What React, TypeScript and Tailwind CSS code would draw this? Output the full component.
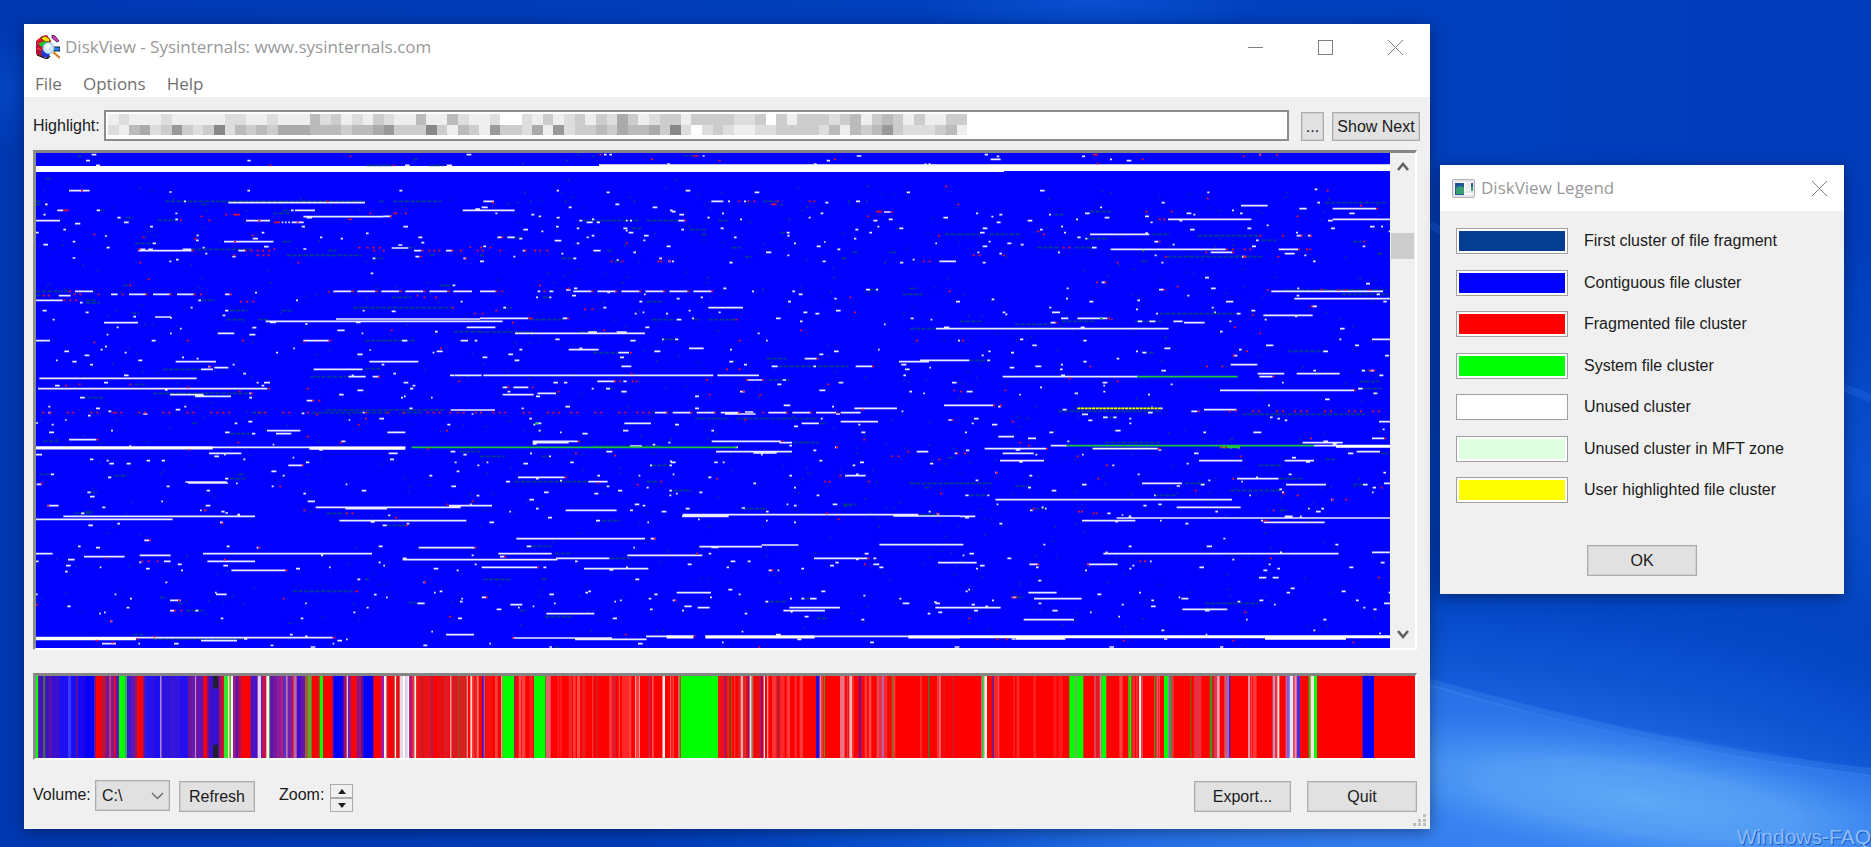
import { useId } from "react";

type Tile = {
  dx: number;
  dy: number;
  unused: string;
  wide?: string;
  fragmented: string;
  first: string;
  system?: string;
  highlighted?: string;
};

// Runs are "x,y,length" in thirds of a pixel, grouped in tiles of the volume map.
const tiles: Tile[] = [
  {
    dx: 0,
    dy: 0,
    unused:
      "275,464,14 258,482,12 742,482,10 288,496,12 1215,496,14 1340,496,16 1400,464,14 207,572,62 508,576,7 742,572,8 1198,572,9 685,608,410 552,604,6 135,613,8 172,631,18 290,631,10 885,631,60 873,631,8 1388,631,52 1426,627,14 910,650,240 1150,649,25 130,644,7 352,653,10 526,640,6 526,658,8 920,653,16 108,662,72 738,662,72 372,667,14 845,667,5 855,667,5 865,667,5 875,667,36 225,671,16 450,680,9 905,680,10 1210,680,14 190,689,8 108,698,8 785,698,8 1098,700,8 315,708,6 590,706,6 960,712,7 1022,716,7 1255,712,12 758,716,16 588,721,8 218,725,8 672,725,148 1264,728,9 458,730,10 130,734,14 792,740,14 320,743,9 608,743,6 910,747,9 1175,744,50 1195,735,12 415,752,160 420,748,16 445,748,14 548,748,26 1242,752,22 1338,752,18 715,752,20 616,761,6 697,770,10 218,774,8 1118,775,8 1246,770,12 528,779,8 508,784,6 1390,775,8 1112,820,8 1358,856,8 225,874,54 176,887,36 108,901,80 333,883,20 387,883,50 459,883,50 531,883,50 1000,874,54 1072,874,54 1144,874,54 1216,874,54 1288,874,54 1360,874,56 765,878,6 675,883,14 595,901,8 888,901,6 1382,905,6 240,908,8 572,923,6 128,932,12 257,937,9 675,932,10 668,946,8 1175,934,12 1088,932,6 465,951,48 400,950,8 510,954,6 158,959,6 312,968,102 797,964,643 1008,957,432 810,967,18 1068,967,14 915,972,8 757,983,12 350,982,6 1400,982,40",
    fragmented:
      "1048,469 808,496 1178,496 243,572 190,631,16 540,661 602,649 675,644 700,644,20 625,661 775,662 822,667,18 1180,640,12 1045,658,10 1215,640 1108,640 1170,649 890,667 280,703 428,712 583,716 755,707 702,725 415,748 575,752 735,752 752,752 770,752 786,752 805,752 820,747 700,766 770,766 788,766 803,766 1075,743 1100,743 1118,743 1136,743 1120,752 1148,752 1408,741 1265,752 1285,752 1300,752 1315,752 1355,752 1380,752 1430,752 1260,770 1395,775 418,788 892,788 443,838 388,856 207,874 128,887 143,887 190,901 208,901 225,901 220,883 238,883 293,883 365,883 437,883 509,883 581,883 600,883 690,883 720,905 738,905 757,905 983,876 1055,874 1127,874 1199,874 1271,874 1343,874 1250,887 1271,892 1305,892 1355,923 1423,941 980,604",
    first:
      "232,469,14 1100,496,75 1240,478,14 1290,496,40 138,536,16 495,604,600 1138,604,18 1180,604,145 108,604,14 108,613,16 605,613,20 300,631,10 850,631,22 820,640,50 380,653,20 472,661,60 405,730,50 848,725,26 575,748,180 860,766,180 1045,766,40 985,752,25 1225,743,20 1125,775,25 1290,766,15 370,856,18 108,874,100 108,887,20 1175,892,60 605,901,40 258,901,32 258,909,42 1060,923,295 690,932,55 395,940,22 680,959,55 775,959,30 1320,856,40 845,932,30",
  },
  {
    dx: 1440,
    dy: 270,
    unused:
      "372,194,8 388,194,8 668,198,6 1130,198,14 1040,212,10 562,222,8 1002,222,8 1334,222,5 1346,222,6 230,302,7 380,307,9 617,302,14 824,307,14 1280,307,10 10,334,32 694,334,36 744,334,6 792,334,6 1128,334,12 1036,338,9 406,343,12 5,352,18 266,352,9 518,352,14 570,361,8 0,361,104 575,365,12 598,374,14 1022,370,8 726,370,6 1212,366,20 46,370,6 154,374,9 176,379,7 230,383,9 682,383,7 780,388,6 1390,383,14 986,383,6 1180,392,12 1226,388,12 298,392,9 336,388,7 320,397,18 350,397,10 438,392,5 450,392,6 595,392,20 228,410,8 290,415,8 430,415,12 722,415,9 1258,415,12 1192,410,6 130,419,14 604,419,8 1126,419,9 184,424,6 446,428,14 437,422,6 920,428,9 1168,428,8 922,437,7 52,442,14 82,442,22 335,437,8 320,442,6 492,437,14 762,442,8 118,446,9 1122,446,7 490,451,6 224,452,20 290,460,8 942,460,6 1032,456,5 1366,460,5 10,469,8 560,469,12 1010,469,12 1072,478,9 340,482,22 128,482,10 460,487,8 858,487,16 244,491,6 100,500,6 922,496,6 280,505,9 538,505,8 410,510,6 0,514,12 565,514,8 576,514,6 748,518,10 1028,514,9 1260,518,10 1378,514,50 1298,509,6 282,595,10 730,595,9 0,604,48 280,604,55 352,604,55 424,604,55 496,604,55 568,604,55 640,604,55 173,604,8 208,604,12 258,600,14 382,607,8 816,604,6 937,604,8 1158,599,12 1188,599,6 492,613,5 956,613,12 276,617,12 168,622,6 208,622,6 590,626,9 662,622,7 1063,626,7 924,635,9 478,635,9 1428,635,12 70,653,8 370,653,9 685,653,104 626,662,6 1068,662,14 716,667,6 970,667,12 1006,671,12 558,671,6 488,667,5 464,671,6 0,685,145 248,685,14 888,685,14 636,685,6 1292,685,9 590,689,14 1352,689,5",
    fragmented:
      "358,194 640,198,16 513,208 716,212 1062,208 1395,289 36,338 775,334 802,334 820,334 890,334 874,343,16 986,334 1000,334 1432,343 1188,365,18 1232,366 1162,379 612,392 64,442 437,460 1374,437 0,473 28,473 6,482 58,482 133,482 162,482 178,482 199,482 392,514 424,514 532,514 541,514 566,514 1328,514 1346,514 177,586 262,595 46,604 64,604 190,604 334,604 406,604 478,604 550,604 622,604 694,604 1406,604 1108,622 46,662 5,671 312,658 334,658 1122,667 146,685,12 262,685 766,689",
    first:
      "610,198,30 850,334,40 310,392,168 500,392,95 715,392,28 455,415,30 630,419,50 665,433,16 95,442,35 1395,433,45 755,473,28 382,482,16 795,500,22 1118,487,14 1234,487,18 1085,505,16 245,505,32 0,496,10 405,514,18 1288,595,22 1268,613,60 1168,599,28 500,635,45 188,622,24 70,653,25 150,689,100 515,689,70 640,689,22 685,689,85 902,428,18 262,271 586,271 292,194 338,199 126,221 258,212 1162,289 132,307 83,343 110,338 150,334 255,334 460,334 902,343 1103,334 1158,334 978,352 965,361 925,388 808,397 625,410 200,550 682,563 1060,563 1212,518 845,599",
  },
  {
    dx: 2880,
    dy: 0,
    unused:
      "74,464,10 110,469,8 92,478,30 366,469,9 450,478,6 500,482,14 898,464,5 240,572,14 742,577,6 1064,568,8 605,608,9 1072,608,8 843,617,80 420,622,6 1018,626,22 1118,626,130 816,631,6 375,640,14 680,640,14 840,640,8 1168,640,16 48,640,6 118,644,9 267,644,6 700,644,6 555,649,12 434,653,14 94,650,6 203,662,14 348,658,6 624,658,250 658,662,9 1118,658,172 1104,662,14 110,667,12 572,667,6 303,680,6 862,685,12 1230,680,14 1263,680,6 1113,685,12 68,685,14 240,689,8 690,689,14 1286,694,6 60,698,14 312,698,6 390,703,178 556,699,8 920,676,6 1008,698,6 1010,707,16 1044,707,10 352,712,10 376,716,6 583,725,12 888,721,8 86,725,6 142,730,12 182,734,9 638,734,6 1208,739,8 68,739,14 396,743,14 876,739,12 452,748,345 956,748,58 752,757,65 974,761,30 52,757,6 294,757,6 118,761,8 584,766,6 1033,766,6 846,770,10 1059,784,8 604,788,6 68,788,9 735,833,12 425,847,10 1218,851,12 753,865,14 320,865,6 597,869,14 934,874,335 1012,865,6 682,887,6 1010,887,8 1250,883,10 95,898,8 318,896,6 1003,896,287 532,901,8 388,905,12 798,905,22 1270,905,10 268,923,6 1055,919,16 755,923,6 528,928,6 874,932,12 276,937,24 128,937,8 136,943,6 763,937,5 588,941,6 830,941,12 910,946,148 1005,949,7 303,955,22 352,955,90 914,959,6",
    fragmented:
      "398,464,16 410,491 545,478 848,469 899,464 948,464 1100,572 740,595 1200,617 1248,626 556,635 632,635 1010,649 596,658 610,658 232,694 248,703 596,725 898,707 966,707 1022,707 1050,707 1210,725 308,743 326,743 798,748 816,748 868,748 852,748 1014,748 1038,748 1048,748 816,757 736,757 38,766 56,766 128,766 614,770 850,770,10 952,770 470,788 408,847 434,847 650,860 610,869 920,870 1082,869 1132,870 1154,870 1226,870 1052,919 876,945 444,955 452,958",
    first:
      "1095,608,185 390,635,65 283,644,28 0,703,60 88,703,55 150,703,30 575,703,55 712,707,190 375,716,70 905,721,45 1180,725,25 232,743,65 345,743,60 620,770,290 545,784,20 1252,761,14 970,870,310 1145,883,140 600,941,225",
    system: "420,955,8 548,752,5",
  },
  {
    dx: 0,
    dy: 960,
    unused:
      "1012,31,22 653,40,50 748,44,18 1305,35,8 320,44,5 510,40,5 1085,40,5 540,26,5 108,62,42 455,62,12 910,62,76 1206,62,16 1382,62,22 1424,62,8 315,80,6 302,89,6 880,85,5 1108,90,5 193,94,14 374,98,6 1310,94,18 1298,98,5 828,98,6 254,106,14 1072,103,16 546,112,6 590,116,6 168,121,5 415,121,12 217,125,13 527,125,121 1108,125,147 270,134,9 698,134,6 1145,134,8 643,143,42 625,140,6 603,148,36 941,148,147 1350,166,12 1363,166,77 730,161,8 1180,161,8 372,166,14 1055,166,6 1045,170,52 1118,170,20 118,175,472 312,188,12 770,188,6 792,188,18 1211,188,14 1238,197,8 165,197,14 785,197,8 114,206,688 1230,206,10 495,210,8 1072,211,18 748,220,8 1017,224,14 510,224,100 588,226,24 585,229,108 1203,233,6 1212,229,5 240,233,14 748,233,8 1293,233,5 920,242,18 145,260,6 553,260,6 288,265,12 1228,265,10 527,269,14 1352,270,88 325,274,9 145,278,8 905,280,8 430,282,12 1415,282,5 1088,278,6 264,287,8 1138,296,14 745,305,12 195,300,5 1046,300,5 108,309,6 704,310,8 1342,314,9 155,314,6 333,332,6 801,332,100 147,337,15 675,337,14 1162,337,54 828,341,46 756,341,10 207,359,82 1024,364,12 818,374,5 388,378,6 108,382,1108 958,390,10 108,404,18 627,400,97 1166,400,27 643,409,14 672,404,5 1390,404,10 1352,395,14 878,413,5 270,418,10 730,418,6 1170,418,12 320,422,6 440,422,10 485,422,10 918,427,10 1364,427,6 328,431,14 380,431,12 865,436,42 1432,436,6 814,454,15 1370,454,8 152,463,10 848,467,6 1288,467,9 324,472,10 675,476,10 556,486,124 564,489,120 708,490,5 110,493,14 1037,493,5 500,499,9 815,499,6 1354,499,14 620,512,10 1085,512,14 262,517,10 910,521,8 1430,527,8 270,530,14 484,544,5 923,544,22 142,557,34 617,557,14 307,562,9 947,562,435 1036,566,125 1347,557,93 1410,553,5 600,571,5 664,575,10 676,579,8 243,580,10 712,584,8 190,589,575 108,598,410 1018,602,381 1165,586,6 1112,606,12 352,611,8 660,607,8 265,616,14 1148,616,12 1220,611,8 433,661,14 234,679,8 680,679,9 1136,679,12 288,683,12 1256,683,168 770,683,6 108,701,50 609,701,507 419,706,93 963,706,6 1415,706,6 252,710,122 204,719,20 1208,719,232 1208,715,12 108,724,8 622,724,143 492,724,20 418,727,6 533,733,12 1136,727,6 1424,733,6 198,737,14 670,737,14 299,742,5 987,742,5 1150,737,5 438,746,11 888,746,12 1301,746,14 195,755,8 543,751,6 694,751,163 1370,751,6 1072,778,9 496,787,6 1270,787,6 108,823,5 344,823,5 648,823,32 645,818,5 1122,824,8 1158,832,5 1302,818,5 1319,814,8 390,836,6 1384,836,5 510,841,32 1380,845,8 202,859,10 380,863,8 915,850,5 1252,850,22 1100,863,6 510,872,14 586,872,9 312,877,5 298,881,5 1060,877,6 662,895,8 902,895,8 1374,895,12 330,904,7 1294,935,5 1338,944,84 870,944,8 108,953,890 915,949,8 732,957,10 603,962,108 1012,962,14 306,971,42 522,971,14 1038,958,5 415,971,5 998,971,5 812,976,8 1270,976,12 932,981,14",
    wide: "108,384,530 928,385,288 108,956,300",
    fragmented:
      "280,67 560,62 726,62 988,62 910,66 1320,85 1172,31 628,139 236,193 388,193 195,197 560,202 804,206 716,215 752,220 920,206 1134,170 1375,184 937,242 955,242 127,278 148,278 200,278 217,278 271,278 289,278 338,278 345,278 361,278 415,278 433,278 487,278 505,278 559,278 577,278 631,278 649,278 667,278 685,278 775,278 793,278 847,278 865,278 920,278 1095,278 1160,278 1208,278 1280,278 1298,278 1316,278 1348,278 1370,278 1388,278 1424,278 948,283 1095,296 1073,314 1338,332 920,350 290,359 712,368 1020,368 564,390 1282,386 906,436 838,499 122,490 142,557 612,571,8 910,571 1340,553 1415,544 1038,580 1055,580 1185,593 665,611 1218,616 447,661 775,683 1424,683 317,714 672,719 424,724 443,724 470,724 857,751 1272,787 1066,814,8 848,836 534,841 108,854 522,872 541,872 1347,890 331,904 410,957 460,950 287,962 334,968 1000,953",
    first:
      "490,148,110 1095,62,150 1360,35,80 930,170,110 405,193,30 460,220,290 245,233,65 980,270,355 755,278,40 937,278,150 1100,278,70 1205,278,60 690,341,60 1095,146,50 577,310,14 1380,395,60 690,476,50 715,463,20 117,463,32 345,467,35 272,517,20 225,580,55 255,575,24 980,580,55 1160,616,60 878,814,180 1095,778,12 480,832,20 560,872,55 535,850,14 1225,848,25 400,944,35 460,957,270 130,364,50",
    system: "1235,382,205",
  },
  {
    dx: 1440,
    dy: 960,
    unused:
      "0,4,68 0,22,46 496,22,12 105,40,390 325,36,26 410,36,30 1368,26,72 1392,22,16 960,4,8 1212,13,5 226,58,13 451,62,16 546,58,5 585,58,10 833,40,6 858,62,5 1434,62,6 266,89,90 298,85,9 627,85,44 118,89,9 523,94,18 1062,94,14 415,98,32 85,103,14 1018,103,12 420,112,12 8,112,14 750,89,6 1194,89,5 974,116,36 104,121,14 748,125,12 1257,125,90 1320,121,120 1264,134,15 792,134,9 424,139,30 875,139,18 1000,139,8 1127,139,50 1275,148,14 1348,143,5 10,166,690 712,166,125 0,166,5 1270,166,8 352,184,54 430,184,10 800,180,46 908,180,10 220,188,14 252,188,10 892,193,12 1076,188,14 1416,188,14 68,202,14 100,202,45 335,206,6 378,206,12 1018,211,18 83,215,8 424,215,16 780,215,14 1288,215,8 172,220,56 68,224,93 1330,220,5 168,229,12 645,229,12 125,265,6 256,260,14 911,256,20 645,265,12 1056,260,6 1392,256,48 0,270,45 1123,265,128 525,278,35 578,278,54 650,278,54 722,278,54 795,276,25 865,278,54 937,278,54 1008,278,60 1082,278,60 735,282,92 1068,282,12 1265,274,5 148,296,8 1022,296,6 433,310,80 1082,305,112 1405,300,12 160,314,6 168,310,16 585,314,12 965,310,52 942,319,12 1135,314,6 176,332,6 429,332,16 694,332,8 240,337,5 307,341,16 1144,337,12 158,364,135 158,368,108 158,372,12 565,368,6 518,374,8 695,364,207 898,368,38 928,377,8 450,378,36 766,382,8 1065,382,8 1000,391,9 379,395,18 708,395,228 820,399,70 843,404,5 1310,395,35 1424,400,8 150,400,6 207,409,6 570,424,6 573,427,14 20,427,5 130,431,14 271,427,10 703,427,10 728,427,6 510,436,6 568,436,8 1018,422,9 1140,427,12 1350,431,10 1118,436,8 352,467,8 114,472,140 168,476,8 476,467,5 578,463,5 685,472,9 928,467,8 1095,467,62 1128,463,8 78,485,12 240,482,6 325,485,58 380,499,8 820,490,8 942,503,6 500,503,6 414,512,13 192,517,14 343,521,12 568,512,8 568,526,6 588,521,5 658,517,9 1010,526,8 148,539,14 464,553,14 488,557,8 920,553,5 942,557,8 1058,553,14 0,557,36 168,566,8 617,566,12 785,564,10 257,571,153 450,571,9 88,575,5 545,575,14 858,575,8 1346,575,6 608,584,707 606,589,140 1240,588,200 204,593,12 654,598,5 28,607,14 348,602,12 502,607,5 858,602,5 942,607,6 1370,582,8 109,656,386 512,656,14 140,679,14 460,683,5 658,680,188 694,682,22 845,675,110 1198,674,242 55,701,160 686,701,8 1154,701,12 442,706,225 60,710,14 0,719,232 228,715,160 1002,715,160 1128,718,8 1180,715,9 285,724,8 752,724,14 803,724,9 1066,728,10 1374,728,66 623,733,12 1180,733,18 1050,737,12 5,742,167 190,742,9 740,742,7 1198,742,12 312,746,193 388,750,12 438,742,6 866,751,12 893,751,5 964,746,8 466,778,12 745,809,12 316,818,8 325,814,8 590,818,103 1024,814,12 208,823,14 523,823,10 776,823,6 1150,827,6 5,832,14 506,836,8 690,832,6 930,836,6 990,836,20 964,836,9 1258,836,6 403,845,5 420,841,5 578,841,9 856,845,9 1362,846,8 1268,850,20 1366,850,14 91,854,36 222,850,5 114,863,5 158,859,5 613,859,22 928,863,152 1366,863,74 50,868,14 510,868,8 653,863,36 606,872,6 910,872,125 932,876,6 199,881,144 794,881,8 1343,881,8 1375,877,12 398,895,13 974,890,12 1144,899,9 785,935,5 888,944,14 98,954,298 285,958,215 498,949,145 676,949,764 952,958,12 474,971,14 726,967,5 1170,967,12 28,971,5 208,981,8 1424,981,14",
    wide: "560,951,80 676,951,328 1285,951,155",
    fragmented:
      "96,8 370,31 960,31 776,62 1308,62 450,98 1010,116 738,148 776,148 1176,139 452,161 402,184 418,184 455,184 466,184 678,180 798,180 846,180 82,202 155,202 232,215 1042,193 686,224 838,224 788,215 1420,211 0,278 38,278 56,278 73,278 128,278 146,278 200,278 217,278 235,278 271,278 289,278 343,278 361,278 415,278 433,278 469,278 487,278 505,278 559,278 631,278 703,278 775,278 847,278 919,278 991,278 1070,278 1145,269 793,300 1415,300 294,364 904,364 1068,382 1150,359 285,400 402,407 1282,395 1234,409 1253,409 1375,418 1430,400 254,472 708,476 1078,467 352,489 470,494 541,485 1032,485 1046,485 1163,485 1380,521 1038,580 1370,580 1073,598 522,656 72,710 648,701 1163,715 172,742 1152,733 874,751 18,832 583,841 640,949 96,954 434,944 835,981",
    first:
      "0,36,160 300,36,50 860,116,60 895,139,210 1290,26,80 550,58,30 865,180,70 340,98,80 390,206,8 645,296,105 770,296,240 1020,310,20 340,378,200 940,368,75 0,409,75 185,409,20 105,485,220 500,485,30 580,512,55 515,436,50 1290,490,150 1090,553,40 1090,558,22 790,566,70 365,602,55 155,679,60 225,701,50 390,715,60 10,778,80 185,778,18 195,890,80 870,845,50 225,981,15 120,872,20 975,836,20 1010,895,30 1320,584,50 1333,503,22 1405,413,22",
    system: "0,382,770 165,310,10",
  },
  {
    dx: 2880,
    dy: 960,
    unused:
      "0,26,626 362,22,12 272,8,16 533,4,14 568,4,18 640,4,28 672,8,62 808,4,6 780,35,8 1140,26,14 180,58,10 370,62,10 1138,58,6 1236,58,54 217,76,13 918,76,22 1185,76,12 613,85,18 837,89,8 85,94,7 1090,94,14 528,94,6 153,98,9 547,98,12 65,106,6 820,107,12 1275,107,12 470,116,8 0,121,28 82,121,8 370,125,10 812,134,80 303,134,6 149,143,14 226,139,18 300,148,8 604,152,14 1060,152,8 893,161,80 1010,161,129 1205,152,10 1228,152,15 1258,166,12 128,170,405 303,166,12 898,170,40 428,188,14 632,193,6 966,188,5 430,197,5 240,202,6 1194,206,14 780,211,402 20,215,18 430,215,6 344,220,10 1240,220,12 178,224,5 564,224,6 1095,238,14 0,256,100 114,260,8 924,256,6 600,265,8 573,262,6 308,269,12 732,269,98 694,274,18 564,278,14 366,283,18 429,292,14 460,292,10 508,296,6 930,292,8 952,296,8 42,296,14 385,301,12 974,301,8 1257,305,33 35,310,6 96,314,16 508,310,6 466,332,16 268,337,12 880,337,24 15,337,6 730,337,8 1268,328,6 115,350,47 204,355,24 1236,355,36 322,364,6 1028,368,120 1090,364,14 1118,372,12 272,377,50 1062,377,66 74,386,184 167,390,14 398,386,195 595,390,9 810,382,6 832,382,8 18,391,10 1190,395,70 128,400,93 702,400,14 1164,400,16 226,404,6 366,404,5 996,413,12 120,422,132 717,422,130 974,422,88 178,426,10 1038,426,12 680,431,6 457,436,6 106,458,6 1270,458,8 208,467,9 986,463,9 533,463,6 831,476,125 888,472,6 47,481,8 745,481,6 844,485,5 366,494,14 546,490,120 722,494,12 978,494,120 1209,494,14 1272,490,18 650,498,10 204,503,9 1238,503,10 958,508,8 275,512,14 1236,517,5 966,517,6 582,526,5 16,526,10 82,526,6 868,526,5 106,539,710 1113,539,5 110,553,5 550,557,10 595,553,10 650,562,192 1084,566,8 245,562,6 210,571,8 255,566,5 1044,566,5 766,575,8 1068,575,14 0,589,46 15,593,12 470,594,820 442,580,10 485,585,5 506,589,8 974,589,24 1020,589,5 366,602,160 466,605,8 600,602,5 118,611,9 911,607,183 676,611,9 903,602,6 790,656,6 0,674,10 250,674,6 506,679,9 740,679,16 1126,674,9 1236,697,54 28,701,14 430,701,706 437,697,6 960,697,6 8,706,5 142,715,12 817,719,6 570,724,5 0,728,50 1262,728,12 208,733,26 381,733,92 926,733,6 517,737,6 60,737,14 48,746,6 228,742,8 508,746,6 718,742,14 1168,742,12 375,751,6 910,751,12 952,746,8 897,773,22 938,773,18 235,782,9 17,814,6 25,809,5 992,805,12 205,818,85 537,818,6 980,818,10 1145,814,12 1286,818,5 412,823,12 155,832,14 222,836,143 656,832,5 664,836,21 96,841,6 574,841,8 833,845,8 898,841,12 1188,841,8 35,854,10 236,850,8 485,854,6 942,854,5 1272,850,18 76,859,8 0,863,122 573,859,14 1210,863,6 42,872,12 277,872,16 667,868,135 735,872,14 1240,868,10 390,877,5 475,890,5 191,899,151 858,899,5 1090,899,9 604,931,9 1060,931,6 1258,940,5 737,944,5 155,957,12 612,957,10 448,981,14 780,981,10",
    wide: "1128,379,162 0,950,1290 168,955,148 915,955,243",
    fragmented:
      "286,8 822,22 898,40 6,62 858,94 818,107 388,139 738,139 784,139 1228,152 1240,152 326,175 470,184 938,170 133,211 1182,211 0,215 100,256 120,256 715,274 806,274 825,272 876,274 894,274 948,274 966,274 1002,274 1020,274 1038,274 1092,274 1110,274 1164,274 1182,274 1200,274 1236,274 1254,274 155,305 1050,355 1272,355 178,368 204,377 258,386 595,386 782,382 795,382 12,400 350,409 839,409 438,436 108,458 412,476 817,476 1262,503 704,512 968,521 1010,526 1115,539 1155,539 218,566 354,575 363,575 398,580 407,580 938,571 910,602 920,602 930,715 538,724 552,724 232,733 381,733 1254,773 155,832 166,832 853,877 25,895 110,958 138,958 488,962 817,962 1177,967",
    first:
      "0,4,68 165,13,110 305,4,100 525,4,80 983,94,120 28,121,60 1198,184,60 1205,206,60 295,274,310 848,283,368 430,292,35 435,368,165 395,386,200 1262,400,25 897,436,70 675,490,60 960,476,70 812,512,150 1095,418,35 0,490,95 165,498,50 583,526,65 30,526,50 225,566,30 960,571,22 172,832,22 735,850,160 735,866,30 1180,494,30 550,98,35 1205,152,30",
    system: "531,170,302 318,377,744 780,382,60",
    highlighted: "352,265,250",
  },
];

function runs(list = "") {
  if (!list) return "";
  return list
    .split(" ")
    .map((run) => {
      const [x, y, length = 6] = run.split(",").map(Number);
      return `M${x} ${y}h${length}`;
    })
    .join("");
}

// Lone first clusters that are spread thinly over the volume.
function strayClusters() {
  let seed = 7;
  const next = () => {
    seed = (seed * 16807) % 2147483647;
    return seed / 2147483647;
  };
  let d = "";
  for (let i = 0; i < 620; i++) {
    const x = 112 + Math.floor(next() * 4040);
    const y = 565 + Math.floor(next() * 300) * 4.5;
    d += `M${x} ${y}h5`;
  }
  return d;
}

function ClusterMap() {
  return (
    <svg
      viewBox="108 459 4062 1485"
      preserveAspectRatio="none"
      className="block h-[495px] min-w-0 flex-1 bg-[#0000ff]"
      role="img"
      aria-label="Cluster map"
    >
      <path d={strayClusters()} stroke="#00309c" strokeWidth="5" />
      <path d="M108 498H1797V493H4170V513H3012V516H108Z" fill="#fff" />
      {tiles.map((tile) => (
        <g
          key={`${tile.dx}-${tile.dy}`}
          transform={`translate(${tile.dx} ${tile.dy})`}
          strokeWidth="5"
          fill="none"
        >
          <path d={runs(tile.first)} stroke="#003c8c" strokeDasharray="13 4" />
          <path d={runs(tile.unused)} stroke="#fff" strokeOpacity="0.92" />
          <path d={runs(tile.wide)} stroke="#fff" strokeWidth="9" />
          <path d={runs(tile.system)} stroke="#1cc43c" />
          <path d={runs(tile.highlighted)} stroke="#00307c" strokeWidth="6" />
          <path d={runs(tile.highlighted)} stroke="#f8f800" strokeDasharray="9 2" />
          <path d={runs(tile.fragmented)} stroke="#e01030" />
        </g>
      ))}
    </svg>
  );
}

// Overview bands as "x,width,colour"; anything left out is fragmented (red).
const bands =
  "108,7,00ff00 115,15,4014c0 130,6,208060 136,12,3a10c8 148,8,5014b0 156,20,3a10d0 176,28,1c10f0 204,9,3838ff 213,15,1c10ec 228,5,5a10b0 233,20,1808f8 253,30,0000ff 283,5,6a1898 305,12,b81440 317,12,701890 329,3,c080e0 332,10,8a1880 342,5,e01020 347,10,6018b0 357,18,00ff00 375,6,40a060 381,12,3a18d0 393,12,6018b0 405,6,901870 430,8,4a18c0 438,22,2414f0 460,20,1c10f0 480,5,9a88ff 485,30,2c14e0 515,25,3414e0 540,25,2410ec 565,10,5818b0 575,10,7018a8 585,4,a890e8 589,21,6414b0 622,8,5810a8 630,28,3a10d0 658,8,a81058 666,6,d01428 672,12,30e830 684,5,e8f0c0 689,4,50c030 693,6,fff4e8 699,8,9818a0 707,8,5a14a8 715,8,a01468 752,21,4a14c8 773,10,dcd4ff 783,4,6018c8 787,12,c01450 799,8,fff4ec 807,4,40a860 811,10,5018c0 821,10,7818a0 831,12,8820a0 843,6,c01c60 849,10,5830c8 859,4,b8a8f0 863,12,7020b0 875,6,c01850 881,6,a070d0 887,3,f09080 890,14,3c10d8 904,11,6018a8 915,8,a06030 923,12,60a830 950,9,e01018 959,10,00ff00 998,4,400cc0 1002,29,0000ff 1031,9,981460 1040,4,f0c0e0 1044,8,701cb0 1071,8,7018a8 1079,4,d01020 1083,7,5010b0 1090,30,0000ff 1144,8,981cb0 1152,8,fff0e8 1160,6,d01838 1176,6,e01010 1184,5,fff0e8 1189,10,e01010 1199,10,e8d8e8 1209,8,ffffff 1217,7,d4e0ff 1224,4,ffffff 1228,6,a01890 1236,6,e03050 1243,6,fff0e8 1249,12,e81818 1261,10,d01820 1271,22,e81418 1293,6,b01850 1317,8,d81820 1329,18,e01820 1350,5,f8a0a0 1355,16,dc1820 1373,5,806030 1378,22,d82020 1400,4,f09090 1411,6,ffd8d0 1417,6,ff3030 1423,5,e02028 1430,6,f07070 1446,5,3018d8 1451,4,b05090 1458,20,f81010 1485,8,f04040 1503,5,d0b080 1508,34,00ff00 1542,6,b02030 1556,8,ff5050 1566,10,ff4040 1588,10,ff2020 1602,33,00ff00 1635,3,508020 1638,14,e0606c 1672,6,ff2020 1680,6,ff1818 1706,10,f02828 1719,8,ff3838 1731,9,ff4848 1746,10,e82020 1776,4,f03838 1790,4,d02030 1827,10,ff3434 1838,10,e01830 1856,4,ff4848 1866,20,ff2828 1886,8,ff4040 1905,4,ffa0a0 1909,6,ff4040 1916,4,ff9090 1944,8,d81830 1956,5,ff5050 1986,3,ff8080 1989,6,fff0f0 2010,4,ff5858 2017,5,ff3838 2034,6,c07060 2042,112,00ff00 2154,20,f01018 2174,4,901880 2182,6,b04020 2193,3,508020 2202,4,ff3030 2214,8,e02020 2222,7,ffa8a8 2229,10,e02828 2243,5,801890 2249,5,f0d8f0 2254,4,70e070 2258,4,e02030 2270,12,e01018 2283,5,6018a0 2291,4,ffe0e0 2301,4,ff9090 2316,14,ff3030 2330,8,c01830 2340,14,ff2828 2360,10,ff3838 2384,6,ff3030 2399,10,ff3838 2448,11,2010e0 2459,5,e090b0 2464,5,ff3030 2471,4,609020 2520,14,f07080 2540,5,e03840 2548,8,f8b8b8 2556,6,ff3030 2578,5,4018d0 2594,7,ff3838 2606,8,ff4848 2630,7,e04858 2637,6,ff2828 2644,8,b860a8 2652,10,ff2828 2675,5,608020 2680,6,ff3838 2760,6,ff2828 2784,4,308030 2811,4,ff3838 2816,7,f06068 2830,4,e01830 2857,4,c82038 2944,3,c080c0 2947,6,30e040 2953,8,fff4f0 2976,6,801880 2982,12,f02830 2994,4,ff5050 3040,4,ff2828 3050,8,ff2828 3100,8,ff2020 3160,10,ff1818 3176,12,ff1818 3208,42,00ff00 3226,4,c08080 3282,6,e04050 3288,10,e01828 3299,6,c090a0 3305,13,00ff00 3318,3,c04030 3358,10,ff4040 3384,4,60a020 3388,6,00ff00 3397,8,f02830 3408,6,ff2828 3417,6,fff0f0 3423,6,e84048 3462,4,509020 3469,6,e85060 3476,4,ff4848 3492,12,00ff00 3504,5,9080d0 3509,8,608040 3517,4,e04050 3571,3,608010 3582,22,e83040 3629,8,509010 3637,5,c02030 3642,9,e83048 3651,8,e8a0b8 3673,6,d06070 3679,8,a868c0 3687,4,4020c0 3744,6,e090a8 3752,4,ff4848 3758,12,ff3838 3818,8,c090c8 3826,5,ff3030 3832,6,ffe8e8 3857,6,b068c0 3863,6,6068ff 3869,10,e8e8ff 3879,5,e04870 3884,6,f890a8 3891,9,3c30f0 3926,6,30c020 3932,10,f0e8e0 3942,9,00ff00 4088,34,0000ff";

function VolumeOverview() {
  return (
    <svg
      viewBox="108 78 4137 248"
      preserveAspectRatio="none"
      className="block h-[82px] w-full bg-[#ff0000]"
      role="img"
      aria-label="Volume overview"
    >
      {bands.split(" ").map((band) => {
        const [x, width, color] = band.split(",");
        return <rect key={x} x={x} y="78" width={width} height="248" fill={`#${color}`} />;
      })}
      <path d="M639 78h15v38h-15zM639 286h15v40h-15z" fill="#20202a" />
    </svg>
  );
}

const pathTop = "edeeedeeeeeddeedeeebdcedecdeebeebdeedffdecedcecdacedcceccccddcfcecccdcbecbceceecccdd";
const pathBottom = "debadc9cdc8dbcbcaaabbbcbba9ccc8cebce9ccdae9dccbcabbac8dfdcdeeddccccdbebcb9cdddcbe9";

function MaskedPath() {
  return (
    <svg
      viewBox="0 0 81 21"
      preserveAspectRatio="none"
      className="pointer-events-none absolute top-1 left-1 h-[21px] w-[72.5%]"
      shapeRendering="crispEdges"
      aria-hidden="true"
    >
      {Array.from({ length: 81 }, (_, i) => (
        <g key={i}>
          <rect x={i} y="0" width="1" height="11" fill={`#${pathTop[i].repeat(3)}`} />
          <rect x={i} y="11" width="1" height="10" fill={`#${pathBottom[i].repeat(3)}`} />
        </g>
      ))}
    </svg>
  );
}

function Wallpaper() {
  return (
    <svg
      viewBox="0 0 1871 847"
      preserveAspectRatio="none"
      className="absolute inset-0 h-full w-full"
      aria-hidden="true"
    >
      <defs>
        <linearGradient id="sky" x1="0" x2="1" y1="0" y2="0">
          <stop offset="0" stopColor="#0038b2" />
          <stop offset="0.6" stopColor="#0040be" />
          <stop offset="1" stopColor="#003cba" />
        </linearGradient>
        <radialGradient id="haze">
          <stop offset="0" stopColor="#3480f2" />
          <stop offset="0.4" stopColor="#2470ea" stopOpacity="0.9" />
          <stop offset="0.75" stopColor="#0c56d6" stopOpacity="0.6" />
          <stop offset="1" stopColor="#0048c8" stopOpacity="0" />
        </radialGradient>
        <radialGradient id="glow">
          <stop offset="0" stopColor="#5ea8f6" />
          <stop offset="0.45" stopColor="#549ff5" stopOpacity="0.9" />
          <stop offset="1" stopColor="#3a86f2" stopOpacity="0" />
        </radialGradient>
        <radialGradient id="spot">
          <stop offset="0" stopColor="#0a50d0" />
          <stop offset="1" stopColor="#0a50d0" stopOpacity="0" />
        </radialGradient>
        <linearGradient id="wave" x1="0" x2="1" y1="0" y2="0">
          <stop offset="0" stopColor="#3a82f2" stopOpacity="0" />
          <stop offset="0.5" stopColor="#3a82f2" stopOpacity="0.5" />
          <stop offset="1" stopColor="#3a82f2" stopOpacity="0.65" />
        </linearGradient>
      </defs>
      <rect width="1871" height="847" fill="url(#sky)" />
      <ellipse cx="1090" cy="0" rx="180" ry="36" fill="url(#spot)" />
      <ellipse cx="0" cy="90" rx="90" ry="60" fill="url(#spot)" fillOpacity="0.5" />
      <ellipse cx="1871" cy="480" rx="460" ry="240" fill="url(#spot)" />
      <ellipse cx="1480" cy="850" rx="880" ry="300" fill="url(#haze)" transform="rotate(6 1480 850)" />
      <path d="M1000 600Q1200 610 1430 684Q1640 748 1871 775V847H1000Z" fill="url(#wave)" />
      <path
        d="M1380 668Q1640 746 1871 772"
        fill="none"
        stroke="#4a90f6"
        strokeOpacity="0.3"
        strokeWidth="8"
      />
      <ellipse cx="1640" cy="800" rx="360" ry="72" fill="url(#glow)" transform="rotate(8 1640 800)" />
      <path d="M1430 224L1445 234M1844 388L1871 398" stroke="#1a62e0" strokeOpacity="0.5" strokeWidth="8" />
    </svg>
  );
}

function DiskViewIcon() {
  return (
    <svg viewBox="0 0 24 24" className="size-6" aria-hidden="true">
      <path d="M0 6L6 1l5-1 4 6-3 17-12-4z" fill="#d81830" />
      <path d="M0 6l7 4 1 13-8-4z" fill="#b81030" />
      <path d="M1 8l3 2M1 13l4 2" stroke="#ff5060" strokeWidth="1" />
      <path d="M5 3l4-2 5 3-1 3-5-1z" fill="#ffe000" stroke="#201800" strokeWidth="0.6" />
      <path d="M3 8l6-2 3 2-4 4-4-1z" fill="#10c828" />
      <path d="M5 16l4-1 5 5-3 3-5-2z" fill="#1838d0" />
      <path d="M1 20l10 4 3-3" fill="none" stroke="#181018" strokeWidth="1.2" />
      <path d="M16 0l3 1 4 5-2 1-5-4z" fill="#d040c0" stroke="#301030" strokeWidth="0.8" />
      <path d="M17 12h7v4h-6z" fill="#2080f0" stroke="#101830" strokeWidth="1" />
      <path d="M17 17l7 6" stroke="#d08020" strokeWidth="2.2" />
      <circle cx="12.500" cy="13" r="5.600" fill="#cce8fa" stroke="#88b4d4" strokeWidth="1" />
      <circle cx="11.500" cy="11.500" r="2.400" fill="#fff" />
    </svg>
  );
}

function LegendIcon() {
  return (
    <svg viewBox="0 0 23 19" className="h-[19px] w-[23px]" aria-hidden="true">
      <rect x="0.500" y="0.500" width="22" height="18" rx="1" fill="#e4e4e8" stroke="#b4b4b8" />
      <rect x="2" y="3" width="19" height="13" fill="#f8f8fa" />
      <rect x="3" y="4" width="9" height="12" fill="#2858a0" />
      <path d="M4 15V9l4-2 4 1v7z" fill="#38a070" />
      <path d="M4 5h4M9 7h2" stroke="#184080" strokeWidth="1" />
      <rect x="14" y="4" width="4" height="7" fill="#ececf0" />
      <rect x="19" y="4" width="2" height="4" fill="#2858a0" />
      <rect x="19" y="8" width="2" height="4" fill="#38a070" />
      <path d="M13 13h8" stroke="#d4d4d8" />
    </svg>
  );
}

function CloseIcon() {
  return (
    <svg viewBox="0 0 15 15" className="size-[15px]" aria-hidden="true">
      <path d="M0 0l15 15M15 0L0 15" stroke="#808080" strokeWidth="1" />
    </svg>
  );
}

const buttonClass =
  "border border-[#acacac] bg-[#e1e1e1] text-center whitespace-nowrap outline outline-[#d0d0d0] -outline-offset-2";

const sunkenClass =
  "border-t-3 border-r-2 border-b-2 border-l-3 border-t-[#858585] border-r-white border-b-white border-l-[#8c8c8c]";

function MainWindow() {
  const highlightId = useId();
  const volumeId = useId();

  return (
    <section className="min-w-0 flex-1 bg-[#f0f0f0] shadow-[0_3px_14px_rgba(0,0,0,0.4)]">
      <header className="flex h-[46px] items-center bg-white pr-6 pl-3">
        <DiskViewIcon />
        <h1 className="ml-[5px] flex-1 font-['Open_Sans',sans-serif] text-[17px] text-[#999999]">
          DiskView - Sysinternals: www.sysinternals.com
        </h1>
        <div className="flex items-center gap-[55px] pr-[3px]">
          <button type="button" aria-label="Minimize">
            <svg viewBox="0 0 15 15" className="size-[15px]" aria-hidden="true">
              <path d="M0 7.500h15" stroke="#808080" />
            </svg>
          </button>
          <button type="button" aria-label="Maximize">
            <svg viewBox="0 0 15 15" className="size-[15px]" aria-hidden="true">
              <rect x="0.500" y="0.500" width="14" height="14" fill="none" stroke="#808080" />
            </svg>
          </button>
          <button type="button" aria-label="Close">
            <CloseIcon />
          </button>
        </div>
      </header>

      <nav className="flex h-[27px] items-center gap-[21px] bg-white pl-[11px] font-['Open_Sans',sans-serif] text-[17px] leading-6 text-[#707070]">
        <button type="button">File</button>
        <button type="button">Options</button>
        <button type="button">Help</button>
      </nav>

      <div className="px-[9px] pt-[13px]">
        <div className="flex items-center pr-px">
          <label htmlFor={highlightId} className="w-[71px]">
            Highlight:
          </label>
          <div className="relative flex-1">
            <input
              id={highlightId}
              type="text"
              readOnly
              className="block h-[31px] w-full border-2 border-[#8c8c8c] bg-white px-1 outline-none"
            />
            <MaskedPath />
          </div>
          <button type="button" className={`${buttonClass} mt-[2px] ml-3 h-[29px] w-[23px]`}>
            ...
          </button>
          <button type="button" className={`${buttonClass} mt-[2px] ml-2 h-[29px] w-[88px]`}>
            Show Next
          </button>
        </div>

        <div className="pr-1">
          <div className={`${sunkenClass} mt-[9px] flex`}>
            <ClusterMap />
            <div className="flex w-[25px] flex-col items-center bg-[#f0f0f0]">
              <button type="button" aria-label="Scroll up" className="flex h-7 w-full items-center justify-center">
                <svg viewBox="0 0 12 10" className="h-[10px] w-3" aria-hidden="true">
                  <path d="M1 8l5-6 5 6" fill="none" stroke="#606060" strokeWidth="2.600" />
                </svg>
              </button>
              <div className="mt-[52px] h-[26px] w-[23px] bg-[#cdcdcd]" />
              <button
                type="button"
                aria-label="Scroll down"
                className="mt-auto flex h-7 w-full items-center justify-center"
              >
                <svg viewBox="0 0 12 10" className="h-[10px] w-3" aria-hidden="true">
                  <path d="M1 2l5 6 5-6" fill="none" stroke="#606060" strokeWidth="2.600" />
                </svg>
              </button>
            </div>
          </div>

          <div className={`${sunkenClass} mt-[23px]`}>
            <VolumeOverview />
          </div>
        </div>

        <footer className="flex h-[69px] items-start pt-5 pr-1">
          <label htmlFor={volumeId} className="mt-[3px] w-[62px]">
            Volume:
          </label>
          <div className="relative">
            <select
              id={volumeId}
              className="h-[31px] w-[75px] appearance-none border border-[#acacac] bg-[#e1e1e1] pl-[6px] outline outline-[#d0d0d0] -outline-offset-2"
            >
              <option>C:\</option>
            </select>
            <svg
              viewBox="0 0 13 8"
              className="pointer-events-none absolute top-3 right-[6px] h-2 w-[13px]"
              aria-hidden="true"
            >
              <path d="M1 1l5.500 5.500L12 1" fill="none" stroke="#707070" strokeWidth="1.500" />
            </svg>
          </div>
          <button type="button" className={`${buttonClass} mt-px ml-[9px] h-[31px] w-[76px]`}>
            Refresh
          </button>
          <span className="mt-[3px] ml-6 w-[51px]">Zoom:</span>
          <div className="mt-1 flex h-7 w-[23px] flex-col border border-[#acacac] bg-[#acacac]">
            <button type="button" aria-label="Zoom in" className="flex flex-1 items-center justify-center bg-[#f0f0f0]">
              <svg viewBox="0 0 8 5" className="h-[5px] w-2" aria-hidden="true">
                <path d="M0 5l4-5 4 5z" fill="#202020" />
              </svg>
            </button>
            <button
              type="button"
              aria-label="Zoom out"
              className="mt-[2px] flex flex-1 items-center justify-center bg-[#f0f0f0]"
            >
              <svg viewBox="0 0 8 5" className="h-[5px] w-2" aria-hidden="true">
                <path d="M0 0l4 5 4-5z" fill="#202020" />
              </svg>
            </button>
          </div>
          <button type="button" className={`${buttonClass} mt-px ml-auto h-[31px] w-[97px]`}>
            Export...
          </button>
          <button type="button" className={`${buttonClass} mt-px ml-4 h-[31px] w-[110px]`}>
            Quit
          </button>
        </footer>
      </div>
      <svg
        viewBox="0 0 13 12"
        className="pointer-events-none -mt-[15px] mr-1 mb-[3px] ml-auto block h-3 w-[13px]"
        aria-hidden="true"
      >
        <path
          d="M10 0h3v3h-3zM10 5h3v3h-3zM10 9h3v3h-3zM5 5h3v3H5zM5 9h3v3H5zM0 9h3v3H0z"
          fill="#bcbcbc"
        />
      </svg>
    </section>
  );
}

const legend = [
  { label: "First cluster of file fragment", color: "bg-[#053d92]" },
  { label: "Contiguous file cluster", color: "bg-[#0000ff]" },
  { label: "Fragmented file cluster", color: "bg-[#ff0000]" },
  { label: "System file cluster", color: "bg-[#00ff00]" },
  { label: "Unused cluster", color: "bg-white" },
  { label: "Unused cluster in MFT zone", color: "bg-[#e0ffe0]" },
  { label: "User highlighted file cluster", color: "bg-[#ffff00]" },
];

function LegendWindow() {
  return (
    <section className="mt-[141px] flex w-[404px] shrink-0 flex-col bg-[#f0f0f0] pb-[18px] shadow-[0_3px_14px_rgba(0,0,0,0.4)]">
      <header className="flex h-[46px] items-center bg-white pr-[17px] pl-3">
        <LegendIcon />
        <h2 className="ml-[6px] flex-1 font-['Open_Sans',sans-serif] text-[17px] text-[#999999]">DiskView Legend</h2>
        <button type="button" aria-label="Close">
          <CloseIcon />
        </button>
      </header>
      <ul className="mt-[17px] flex h-[275px] flex-col justify-between pl-4">
        {legend.map((item) => (
          <li key={item.label} className="flex items-center">
            <span className={`${item.color} h-[26px] w-28 border border-[#a0a0a0] ring-2 ring-white ring-inset`} />
            <span className="ml-4">{item.label}</span>
          </li>
        ))}
      </ul>
      <button type="button" className={`${buttonClass} mt-[42px] h-[31px] w-[110px] self-center`}>
        OK
      </button>
    </section>
  );
}

export default function App() {
  return (
    <main className="relative min-h-screen overflow-hidden bg-[#003ab5] font-['Liberation_Sans',sans-serif] text-base leading-6 text-[#1a1a1a]">
      <Wallpaper />
      <div className="relative flex items-start gap-[10px] pt-6 pr-[27px] pb-[18px] pl-6">
        <MainWindow />
        <LegendWindow />
      </div>
      <p className="absolute right-0 bottom-0 text-[21px] leading-5 text-[#8cbcf8] [text-shadow:1px_1px_0_#1c58c8]">
        Windows-FAQ
      </p>
    </main>
  );
}
